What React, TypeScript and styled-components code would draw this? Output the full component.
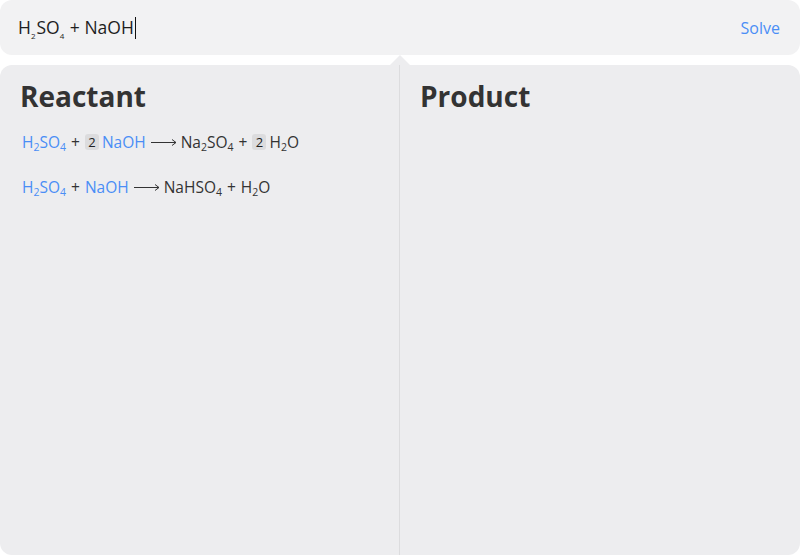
import styled, { createGlobalStyle } from 'styled-components';

const GlobalStyle = createGlobalStyle`
  html, body {
    margin: 0;
    padding: 0;
    background: #ffffff;
    font-family: 'Open Sans', 'Liberation Sans', sans-serif;
  }
`;

const blue = '#4a8ef6';
const ink = '#333333';

const St = {
  Page: styled.div`
    width: 800px;
    height: 555px;
    display: flex;
    flex-direction: column;
    gap: 10px;
    overflow: hidden;
  `,
  SearchBar: styled.div`
    height: 55px;
    flex: none;
    background: #f2f2f3;
    border-radius: 12px;
    display: flex;
    align-items: center;
    justify-content: space-between;
    padding: 0 20px 0 18px;
    box-sizing: border-box;
  `,
  Query: styled.div`
    font-size: 17.5px;
    line-height: 22px;
    color: #1e1e1e;
    white-space: nowrap;
  `,
  QuerySub: styled.span`
    font-size: 8px;
    vertical-align: -5px;
    line-height: 0;
    margin: 0 1px 0 0;
  `,
  Caret: styled.span`
    display: inline-block;
    width: 1px;
    height: 22px;
    background: #111;
    margin-left: 1px;
    vertical-align: -5px;
  `,
  Solve: styled.button`
    border: none;
    background: transparent;
    padding: 0;
    font-family: inherit;
    font-size: 16px;
    color: ${blue};
    cursor: pointer;
  `,
  Panel: styled.div`
    position: relative;
    flex: 1;
    background: #ededef;
    border-radius: 12px;
    display: grid;
    grid-template-columns: 399px 1fr;

    &::before {
      content: '';
      position: absolute;
      left: 390px;
      top: -10px;
      border-left: 10px solid transparent;
      border-right: 10px solid transparent;
      border-bottom: 10px solid #ededef;
    }
  `,
  Column: styled.section<{ $divider?: boolean }>`
    padding: 12px 20px 0 20px;
    border-left: ${(p) => (p.$divider ? '1px solid #dcdcde' : 'none')};
  `,
  Title: styled.h2`
    margin: 0;
    font-size: 28px;
    font-weight: 700;
    color: ${ink};
    line-height: 38px;
  `,
  Reactions: styled.div`
    margin-top: 17px;
    display: flex;
    flex-direction: column;
    gap: 25px;
    padding-left: 2px;
  `,
  Reaction: styled.div`
    display: flex;
    align-items: center;
    height: 20px;
    font-size: 15.5px;
    color: ${ink};
    white-space: nowrap;
  `,
  Species: styled.span<{ $given?: boolean }>`
    color: ${(p) => (p.$given ? blue : ink)};
  `,
  Sub: styled.sub`
    font-size: 10.5px;
    vertical-align: -3px;
    line-height: 0;
  `,
  Plus: styled.span`
    margin: 0 5px;
  `,
  Coef: styled.span`
    display: inline-flex;
    align-items: center;
    justify-content: center;
    width: 14px;
    height: 16px;
    border-radius: 3px;
    background: #dcdcde;
    font-size: 13px;
    color: #222;
    margin-right: 3px;
  `,
  Arrow: styled.svg`
    margin: 0 4px 0 5px;
    flex: none;
  `,
};

type Part = [string, string?];

const Formula = ({ parts, given }: { parts: Part[]; given?: boolean }) => (
  <St.Species $given={given}>
    {parts.map(([t, s], i) => (
      <span key={i}>
        {t}
        {s && <St.Sub>{s}</St.Sub>}
      </span>
    ))}
  </St.Species>
);

const Arrow = () => (
  <St.Arrow width="26" height="10" viewBox="0 0 26 10">
    <path d="M0 5.5H25" stroke="#333" strokeWidth="1" />
    <path d="M21 2.5L25 5.5L21 8.5" stroke="#333" strokeWidth="1" fill="none" />
  </St.Arrow>
);

const H2SO4: Part[] = [['H', '2'], ['SO', '4']];
const NaOH: Part[] = [['NaOH']];

const App = () => {
  return (
    <>
      <GlobalStyle />
      <St.Page>
        <St.SearchBar>
          <St.Query>
            H<St.QuerySub>2</St.QuerySub>SO<St.QuerySub>4</St.QuerySub> + NaOH
            <St.Caret />
          </St.Query>
          <St.Solve>Solve</St.Solve>
        </St.SearchBar>
        <St.Panel>
          <St.Column>
            <St.Title>Reactant</St.Title>
            <St.Reactions>
              <St.Reaction>
                <Formula parts={H2SO4} given />
                <St.Plus>+</St.Plus>
                <St.Coef>2</St.Coef>
                <Formula parts={NaOH} given />
                <Arrow />
                <Formula parts={[['Na', '2'], ['SO', '4']]} />
                <St.Plus>+</St.Plus>
                <St.Coef>2</St.Coef>
                <Formula parts={[['H', '2'], ['O']]} />
              </St.Reaction>
              <St.Reaction>
                <Formula parts={H2SO4} given />
                <St.Plus>+</St.Plus>
                <Formula parts={NaOH} given />
                <Arrow />
                <Formula parts={[['NaHSO', '4']]} />
                <St.Plus>+</St.Plus>
                <Formula parts={[['H', '2'], ['O']]} />
              </St.Reaction>
            </St.Reactions>
          </St.Column>
          <St.Column $divider>
            <St.Title>Product</St.Title>
          </St.Column>
        </St.Panel>
      </St.Page>
    </>
  );
};

export default App;
